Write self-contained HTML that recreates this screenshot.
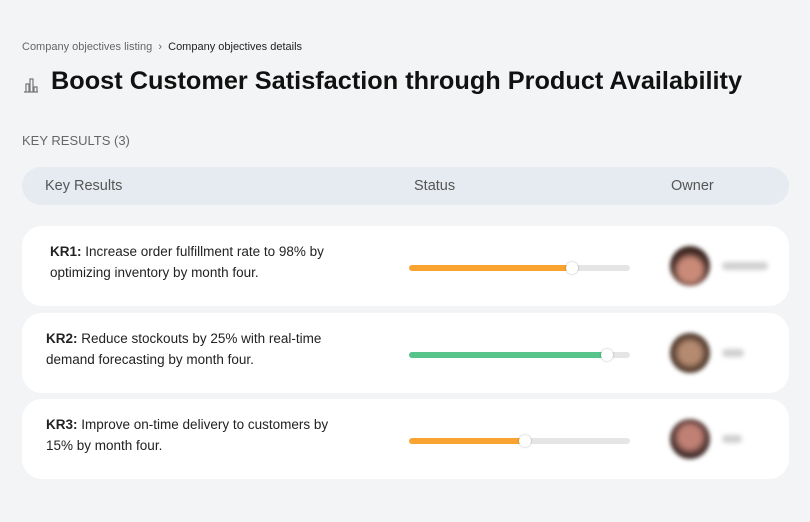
<!DOCTYPE html>
<html><head><meta charset="utf-8"><style>
body{margin:0;width:810px;height:522px;background:#f3f4f6;font-family:"Liberation Sans",sans-serif;position:relative;overflow:hidden;color:#111}
.a{position:absolute}
.bc{left:22px;top:41px;font-size:11px;color:#666}
.bc b{font-weight:normal;color:#222}
h1{position:absolute;left:22px;top:67px;margin:0;font-size:25.3px;font-weight:bold;color:#111;white-space:nowrap;letter-spacing:0px}
.kr{left:22px;top:133px;font-size:13px;color:#666}
.hd{left:22px;top:167px;width:767px;height:38px;background:#e6ebf2;border-radius:19px;font-size:14.5px;color:#555}
.hd span{position:absolute;top:11px}
.card{position:absolute;left:22px;width:767px;height:80px;background:#fff;border-radius:20px}
.t{position:absolute;left:27px;top:15px;font-size:13.5px;line-height:21px;color:#222;width:305px}
.bar{position:absolute;left:387px;top:39px;width:221px;height:6px;background:#e5e5e5;border-radius:3px}
.f{position:absolute;left:0;top:0;height:6px;border-radius:3px}
.k{position:absolute;top:-3px;width:12px;height:12px;border-radius:50%;background:#fff;box-shadow:0 0 2px rgba(0,0,0,.3);margin-left:-6px}
.av{position:absolute;left:648px;top:20px;width:40px;height:40px;border-radius:50%;filter:blur(2px)}
.nm{position:absolute;left:700px;top:36px;width:46px;height:8px;background:#d0d0d0;filter:blur(2.5px);border-radius:4px}
</style></head><body>
<div class="a bc">Company objectives listing &nbsp;›&nbsp; <b>Company objectives details</b></div>
<svg class="a" style="left:22px;top:76px" width="18" height="18" viewBox="0 0 18 18" fill="none" stroke="#777" stroke-width="1.2"><path d="M2 16h14M4 16V8h3v8M8 16V3h3v13M12 16v-5h3v5"/></svg>
<h1 style="left:51px">Boost Customer Satisfaction through Product Availability</h1>
<div class="a kr">KEY RESULTS (3)</div>
<div class="a hd"><span style="left:23px">Key Results</span><span style="left:392px">Status</span><span style="left:649px">Owner</span></div>
<div class="card" style="top:226px"><div class="t" style="left:28px;width:310px"><b>KR1:</b> Increase order fulfillment rate to 98% by optimizing inventory by month four.</div>
<div class="bar"><div class="f" style="width:163px;background:#f9a431"></div><div class="k" style="left:163px"></div></div>
<div class="av" style="background:radial-gradient(circle at 50% 60%,#c98a78 0 35%,#3a2420 60%)"></div><div class="nm"></div></div>
<div class="card" style="top:313px"><div class="t" style="left:24px"><b>KR2:</b> Reduce stockouts by 25% with real-time demand forecasting by month four.</div>
<div class="bar"><div class="f" style="width:198px;background:#56c48b"></div><div class="k" style="left:198px"></div></div>
<div class="av" style="background:radial-gradient(circle at 50% 50%,#b48a70 0 35%,#4a3428 65%)"></div><div class="nm" style="width:22px"></div></div>
<div class="card" style="top:399px"><div class="t" style="left:24px;width:300px"><b>KR3:</b> Improve on-time delivery to customers by 15% by month four.</div>
<div class="bar"><div class="f" style="width:116px;background:#f9a431"></div><div class="k" style="left:116px"></div></div>
<div class="av" style="background:radial-gradient(circle at 50% 45%,#c08074 0 35%,#3a2624 65%)"></div><div class="nm" style="width:20px"></div></div>
</body></html>
